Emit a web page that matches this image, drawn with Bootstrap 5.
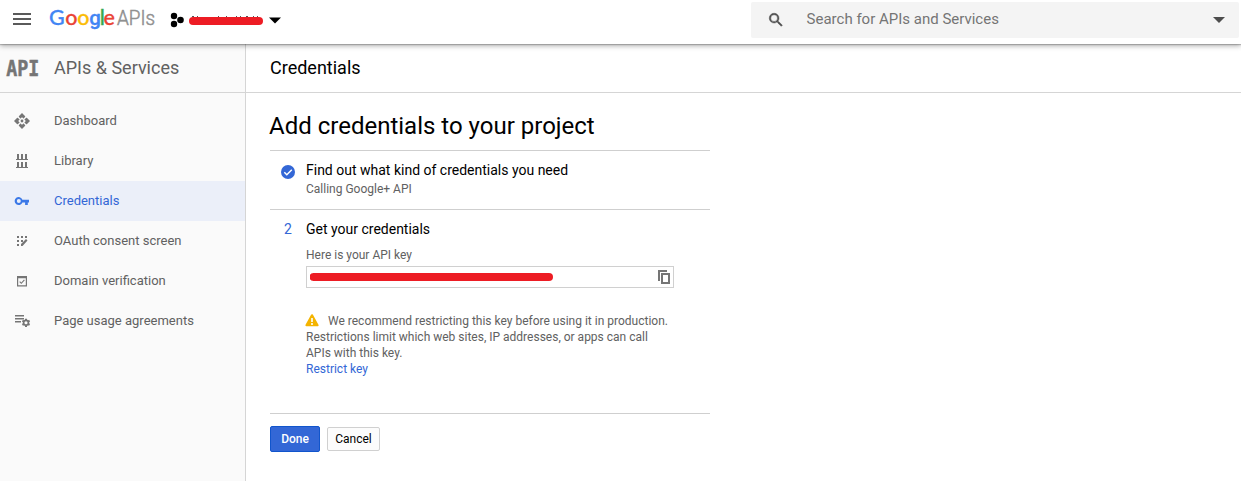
<!DOCTYPE html>
<html lang="en">
<head>
<meta charset="utf-8">
<title>Credentials - Google APIs</title>
<link href="https://cdn.jsdelivr.net/npm/bootstrap@5.3.0/dist/css/bootstrap.min.css" rel="stylesheet">
<style>
body{font-family:Roboto,"Liberation Sans",sans-serif;font-size:13px;color:#000;height:481px;overflow:hidden;background:#fff}
svg{display:block;flex:none}
.topbar{height:44px;background:#fff;box-shadow:0 1px 1px rgba(0,0,0,.2),0 2px 5px rgba(0,0,0,.3);z-index:2;padding:0 2px 0 13px}
.search{width:488px;height:36px;margin-top:2px;background:#f4f4f4;border-radius:2px;padding:0 14px 0 16px;color:#757575;font-size:15px}
.search-text{margin:-2px 0 0 21.6px}
.side{width:246px;background:#fafafa;border-right:1px solid #d5d5d5}
.titlebar{height:49px;padding-bottom:2px;border-bottom:1px solid #d5d5d5;font-size:18px;font-weight:400}
.side .titlebar{color:#616161}
.side .nav{padding-top:8px}
.side .nav-link{height:40px;padding:0 0 0 14px;color:#616161;border-radius:0;gap:24px}
.side .nav-link.active{background:#ebeff9;color:#3367d6}
.side .nav-link svg{fill:#757575}
.side .nav-link.active svg{fill:#3b78e7}
.wizard{width:440px;margin-left:24px}
.wizard h1{font-size:24px;line-height:32px;margin:17px 0 8px -1px;font-weight:400}
.step{border-top:1px solid #cfcfcf}
.step-mark{width:36px;padding-left:11px}
.step h2{font-size:14px;line-height:20px;margin:0;font-weight:400}
.note{font-size:12px;line-height:16px;color:#616161}
.keybox{width:368px;height:22px;border:1px solid #d0d0d0;padding:0 3px}
.blue{color:#3367d6}
.btn-act{font-size:12px;line-height:16px;border-radius:2px;padding:0}
.btn-done{width:50px;height:26px;background:#3367d6;border:1px solid #1155cc;color:#fff;font-weight:500}
.btn-cancel{width:53px;height:24px;background:#fcfcfc;border:1px solid #d0d0d0;color:#000}
</style>
</head>
<body class="d-flex flex-column">
<header class="topbar d-flex position-relative">
  <svg class="mt-2" width="18" height="22" fill="none" stroke="#5a5a5a" stroke-width="2"><path d="M0 6h18M0 11h18M0 16h18"/></svg>
  <svg class="ms-3" width="110" height="36"><text y="25" font-family="Lato, sans-serif" font-size="21.5" font-weight="500" stroke-width=".3"><tspan x="2" fill="#4285f4" stroke="#4285f4">G</tspan><tspan x="18.300" fill="#ea4335" stroke="#ea4335">o</tspan><tspan x="30.300" fill="#fbbc05" stroke="#fbbc05">o</tspan><tspan x="42.300" font-family="Roboto" font-size="20.500" fill="#4285f4" stroke="#4285f4">g</tspan><tspan x="52.800" fill="#34a853" stroke="#34a853">l</tspan><tspan x="56.400" fill="#ea4335" stroke="#ea4335">e</tspan></text>
    <text x="70" y="25" font-family="Roboto" font-size="19.5" font-weight="300" fill="#909090" stroke="#909090" stroke-width=".5" textLength="38" lengthAdjust="spacingAndGlyphs">APIs</text></svg>
  <svg style="margin-left:13px" width="15" height="36"><circle cx="4" cy="16" r="3.2"/><circle cx="10.5" cy="20" r="3.3"/><circle cx="4" cy="24" r="3.2"/></svg>
  <svg style="margin-left:3px" width="76" height="36"><path d="M5 21H71" stroke="#ed1c24" stroke-width="8" stroke-linecap="round"/><path d="M4 16.500h2M9 16.500h1M30 16.500h1M38 16.500h1M48 16.500h1M52 16.500h1M58 16.500h2M65 16.500h1M69 16.500h1" stroke="#555"/></svg>
  <svg style="margin-left:5px" width="12" height="36"><path d="M0 17.500H12L6 23.500Z"/></svg>
  <div class="search d-flex align-items-center ms-auto">
    <svg width="18" height="18" viewBox="0 0 24 24" fill="#4d4d4d"><path stroke="#4d4d4d" stroke-width=".6" d="M15.500 14h-.79l-.28-.27A6.470 6.470 0 0 0 16 9.500 6.500 6.500 0 1 0 9.500 16c1.610 0 3.090-.59 4.230-1.570l.27.28v.79l5 4.990L20.490 19zm-6 0A4.500 4.500 0 1 1 14 9.500a4.500 4.500 0 0 1-4.500 4.500z"/></svg>
    <span class="search-text">Search for APIs and Services</span>
    <svg class="ms-auto" width="12" height="6" fill="#4d4d4d"><path d="M0 0H12L6 6Z"/></svg>
  </div>
</header>
<div class="d-flex flex-grow-1">
  <aside class="side flex-shrink-0">
    <div class="titlebar d-flex align-items-center">
      <svg width="54" height="30"><text x="6.300" y="24" font-family="DejaVu Sans Mono" font-weight="bold" font-size="21.500" fill="#757575" stroke="#757575" stroke-width=".5" textLength="33" lengthAdjust="spacingAndGlyphs">API</text></svg>
      <span>APIs &amp; Services</span>
    </div>
    <nav class="nav flex-column">
      <a class="nav-link d-flex align-items-center" href="#"><svg width="16" height="16"><path d="M8 0l3.200 3.200v1.800L9.800 5.800 8 4.200 6.200 5.800 4.800 5V3.200zM8 16l3.200-3.200V11l-1.400-.8L8 11.800l-1.800-1.600-1.400.8v1.800zM0 8l3.200-3.200H5l.8 1.400L4.200 8l1.600 1.800-.8 1.400H3.200zM16 8l-3.200-3.200H11l-.8 1.400L11.800 8l-1.600 1.800.8 1.400h1.800z"/><path d="M4 4l2 2M12 4l-2 2M4 12l2-2M12 12l-2-2" stroke="#fafafa" stroke-width="1.300"/><circle cx="8" cy="8" r="1.400"/></svg>Dashboard</a>
      <a class="nav-link d-flex align-items-center" href="#"><svg width="16" height="16"><path d="M3 1h2v5h2V1h2v5h2V1h2v5h1v1H2V6h1zM3 9h2v5h2V9h2v5h2V9h2v5h1v1H2v-1h1z"/></svg>Library</a>
      <a class="nav-link active d-flex align-items-center" href="#"><svg width="16" height="16"><path fill-rule="evenodd" d="M8.400 6.700H15v2.700h-1.200V12h-2.700V9.400H8.400A4 4 0 1 1 8.400 6.700zM4.800 6A2 2 0 1 0 4.800 10 2 2 0 0 0 4.800 6z"/></svg>Credentials</a>
      <a class="nav-link d-flex align-items-center" href="#"><svg width="16" height="16"><path d="M3 3h2v2H3zM7 3h2v2H7zM11 3h2v2h-2zM3 7h2v2H3zM7 7h2v2H7zM3 11h2v2H3zM7 11l5-5 1.500 1.500L8.500 13H7z"/></svg>OAuth consent screen</a>
      <a class="nav-link d-flex align-items-center" href="#"><svg width="16" height="16"><path fill-rule="evenodd" d="M3 3h10v10.500H3zM4.200 5.200v7.100h7.600V5.200z"/><path d="M5.700 8.700l1.600 1.600 3.100-3.400" fill="none" stroke="#757575" stroke-width="1.100"/></svg>Domain verification</a>
      <a class="nav-link d-flex align-items-center" href="#"><svg width="17" height="16" style="margin-right:-1px"><path d="M1 2h9v1.500H1zM1 5h9v1.500H1zM1 8h6v1.500H1z"/><circle cx="12" cy="9.800" r="2.400" fill="none" stroke="#757575" stroke-width="1.700"/><path d="M12 5.700v1.500M12 12.400v1.500M8.400 7.700l1.300.8M14.300 11.100l1.300.8M8.400 11.900l1.300-.8M14.300 8.500l1.300-.8" stroke="#757575" stroke-width="2"/></svg>Page usage agreements</a>
    </nav>
  </aside>
  <main class="flex-grow-1">
    <div class="titlebar d-flex align-items-center ps-4"><span>Credentials</span></div>
    <div class="wizard">
      <h1>Add credentials to your project</h1>
      <section class="step d-flex" style="height:59px">
        <div class="step-mark pt-3"><svg style="margin-top:-2px" width="14" height="14"><circle cx="7" cy="7" r="7" fill="#3367d6"/><path d="M3.300 7.300l2.500 2.500 5-5" fill="none" stroke="#fff" stroke-width="1.500"/></svg></div>
        <div style="padding-top:9px"><h2>Find out what kind of credentials you need</h2><div class="note" style="margin-top:1px">Calling Google+ API</div></div>
      </section>
      <section class="step d-flex" style="height:204px">
        <div class="step-mark blue" style="padding:9px 0 0 14px;font-size:14px;line-height:20px">2</div>
        <div style="padding-top:9px">
          <h2>Get your credentials</h2>
          <div class="note" style="margin:8px 0 3px">Here is your API key</div>
          <div class="keybox d-flex align-items-center justify-content-between">
            <svg width="246" height="12"><path d="M3.500 6H239" stroke="#ed1c24" stroke-width="8" stroke-linecap="round"/></svg>
            <svg width="12" height="14" fill="none" stroke="#757575" stroke-width="2"><path d="M1 11V1H9"/><rect x="4" y="4" width="7" height="9"/></svg>
          </div>
          <div class="note" style="margin-top:25px"><svg class="d-inline-block" style="margin:-3px 9px 0 -1px" width="14" height="13"><path d="M7 1.300L12.500 11.200H1.500Z" fill="#f4b400" stroke="#f4b400" stroke-width="2.200" stroke-linejoin="round"/><path d="M7 4v4M7 9v2" stroke="#fff" stroke-width="1.600"/></svg><span>We recommend restricting this key before using it in production.</span><br>Restrictions limit which web sites, IP addresses, or apps can call<br>APIs with this key.<br><a class="blue text-decoration-none" href="#">Restrict key</a></div>
        </div>
      </section>
      <div class="step d-flex align-items-center" style="height:51px;gap:7px">
        <button class="btn btn-act btn-done">Done</button><button class="btn btn-act btn-cancel">Cancel</button>
      </div>
    </div>
  </main>
</div>
<script src="https://cdn.jsdelivr.net/npm/bootstrap@5.3.0/dist/js/bootstrap.bundle.min.js"></script>
</body>
</html>
